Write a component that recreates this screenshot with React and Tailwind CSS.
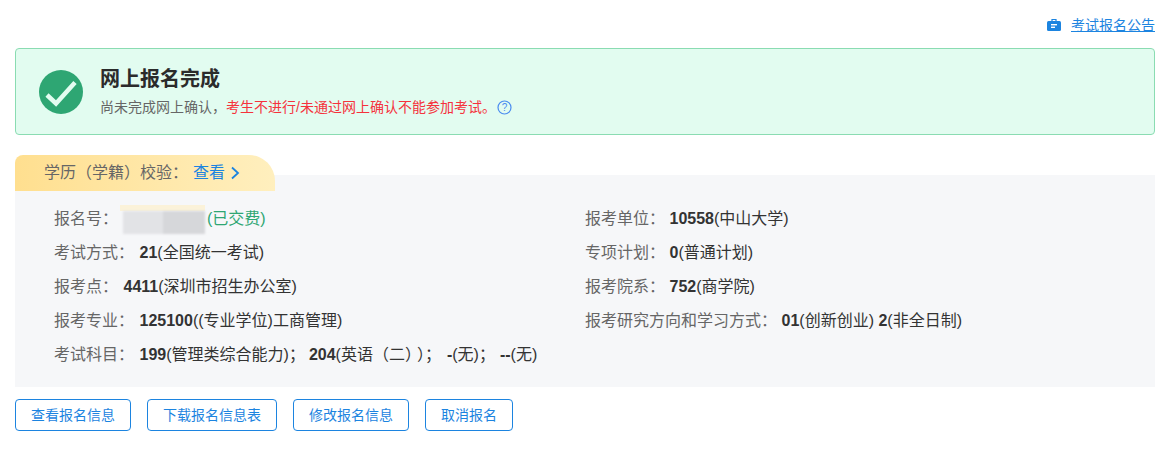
const FONT = 'font-["Liberation_Sans","Noto_Sans_CJK_SC",sans-serif]';

function Field({ label, gap = 'ml-[5.5px]', children }) {
  return (
    <div className="flex h-[34px] items-center whitespace-nowrap text-[16px] text-[#333]">
      <span className="text-[#666]">{label}</span>
      <span className={gap}>{children}</span>
    </div>
  );
}

function Redacted() {
  return (
    <span className="mr-[2px] inline-flex h-[29px] w-[85px] flex-col align-middle">
      <span className="h-[6px] w-full bg-[#fbf2d9]" />
      <span className="flex h-[23px] w-full pl-[3px] blur-[1px]">
        <span className="h-full w-[40px] bg-[#e2e3e6]" />
        <span className="h-full w-[42px] bg-[#d6d7da]" />
      </span>
    </span>
  );
}

function OutlineButton({ children }) {
  return (
    <button className="h-[32px] rounded-[4px] border border-[#1c84e0] bg-white px-[15px] text-[14px] text-[#1c84e0]">
      {children}
    </button>
  );
}

export default function App() {
  return (
    <div className={`${FONT} min-h-[453px] bg-white pl-[15px] pr-[12px] pt-[14px]`}>
      <div className="flex h-[22px] items-center justify-end text-[14px] text-[#1c84e0]">
        <svg width="14" height="14" viewBox="0 0 14 14" className="mr-[10px]" aria-hidden="true">
          <path d="M5 3V1.5h4V3" fill="none" stroke="#1c84e0" strokeWidth="1.2" />
          <rect x="0" y="3" width="14" height="10" rx="1.5" fill="#1c84e0" />
          <rect x="4" y="6" width="6" height="1.4" fill="#fff" />
          <rect x="4" y="8.6" width="4" height="1.4" fill="#fff" />
        </svg>
        <a className="underline">考试报名公告</a>
      </div>

      <div className="mt-[12px] flex h-[87px] items-center rounded-[4px] border border-[#8adcb2] bg-[#e2fcf0] pl-[23px]">
        <svg width="44" height="44" viewBox="0 0 44 44" aria-hidden="true">
          <circle cx="22" cy="22" r="22" fill="#2ea673" />
          <path d="M8 25l9 8.5L36 12.5" fill="none" stroke="#e2fcf0" strokeWidth="4.5" />
        </svg>
        <div className="ml-[17px]">
          <div className="text-[20px] font-bold leading-[26px] text-[#2b2b2b]">网上报名完成</div>
          <div className="mt-[5px] flex items-center text-[14px] leading-[20px] text-[#666]">
            尚未完成网上确认，
            <span className="text-[#f5323c]">考生不进行/未通过网上确认不能参加考试。</span>
            <svg width="15" height="15" viewBox="0 0 15 15" className="ml-[1px]" aria-hidden="true">
              <circle cx="7.5" cy="7.5" r="6.5" fill="none" stroke="#4a8cf0" strokeWidth="1.2" />
              <text x="7.5" y="11" textAnchor="middle" fontSize="10" fill="#4a8cf0">?</text>
            </svg>
          </div>
        </div>
      </div>

      <div className="mt-[20px]">
        <div className="relative z-10 flex h-[36px] w-[260px] items-center rounded-tl-[8px] rounded-tr-[26px] bg-gradient-to-r from-[#ffdf8f] to-[#ffefbe] pl-[29px] text-[16px] text-[#666]">
          学历（学籍）校验：
          <a className="ml-[5px] flex items-center text-[#1c84e0]">
            查看
            <svg width="10" height="14" viewBox="0 0 10 14" className="ml-[5px]" aria-hidden="true">
              <path d="M2 1.5L8 7l-6 5.5" fill="none" stroke="#1c84e0" strokeWidth="1.8" />
            </svg>
          </a>
        </div>
        <div className="-mt-[16px] grid h-[212px] grid-cols-[531px_1fr] bg-[#f6f7f9] pl-[39px] pt-[27px]">
          <div>
            <Field label="报名号：" gap="ml-[2px]">
              <span className="flex items-center">
                <Redacted />
                <span className="text-[#2ea673]">(已交费)</span>
              </span>
            </Field>
            <Field label="考试方式：">
              <b>21</b>(全国统一考试)
            </Field>
            <Field label="报考点：">
              <b>4411</b>(深圳市招生办公室)
            </Field>
            <Field label="报考专业：">
              <b>125100</b>((专业学位)工商管理)
            </Field>
            <Field label="考试科目：">
              <b>199</b>(管理类综合能力)；<b className="ml-[4px]">204</b>(英语（二）<span className="ml-[4px]">）；</span><b className="ml-[6px]">-</b>(无)；<b className="ml-[5px]">--</b>(无)
            </Field>
          </div>
          <div>
            <Field label="报考单位：" gap="ml-[4.5px]">
              <b>10558</b>(中山大学)
            </Field>
            <Field label="专项计划：" gap="ml-[4.5px]">
              <b>0</b>(普通计划)
            </Field>
            <Field label="报考院系：" gap="ml-[4.5px]">
              <b>752</b>(商学院)
            </Field>
            <Field label="报考研究方向和学习方式：" gap="ml-[4.5px]">
              <b>01</b>(创新创业) <b>2</b>(非全日制)
            </Field>
          </div>
        </div>
      </div>

      <div className="mt-[12px] flex gap-[16px]">
        <OutlineButton>查看报名信息</OutlineButton>
        <OutlineButton>下载报名信息表</OutlineButton>
        <OutlineButton>修改报名信息</OutlineButton>
        <OutlineButton>取消报名</OutlineButton>
      </div>
    </div>
  );
}
